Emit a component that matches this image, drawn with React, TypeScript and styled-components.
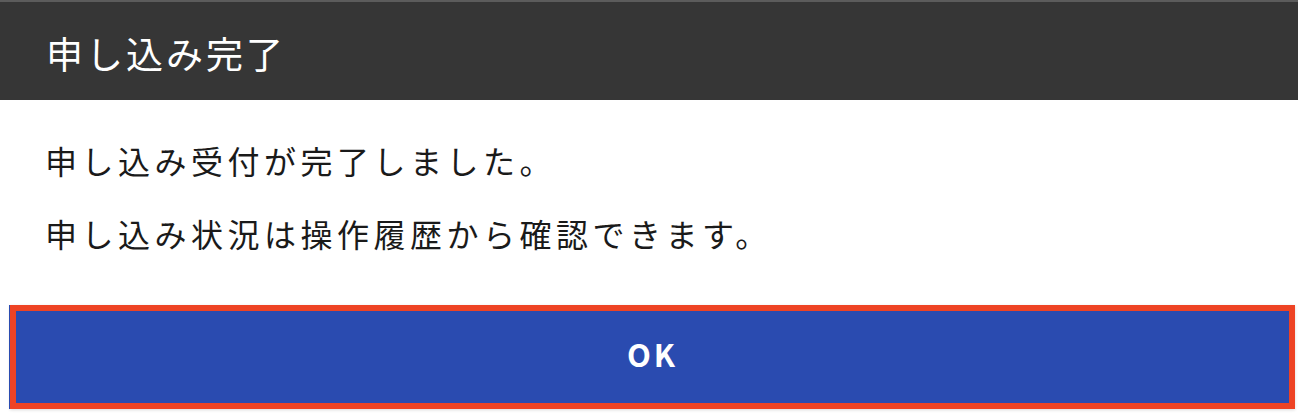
import styled, { createGlobalStyle } from "styled-components";

const GlobalStyle = createGlobalStyle`
  html, body {
    margin: 0;
    padding: 0;
    background: #fff;
  }
  body {
    font-family: "Noto Sans CJK JP", "Noto Sans", sans-serif;
  }
`;

const Dialog = styled.div`
  width: 1298px;
  height: 414px;
  display: flex;
  flex-direction: column;
  background: #fff;
  overflow: hidden;
`;

const Header = styled.div`
  height: 98px;
  border-top: 2px solid #5c5c5c;
  background: #363636;
  display: flex;
  align-items: center;
  padding: 4px 0 0 46px;
  box-sizing: border-box;
  height: 100px;
`;

const Title = styled.h1`
  margin: 0;
  color: #fff;
  font-size: 37px;
  font-weight: 400;
  letter-spacing: 3px;
`;

const Body = styled.div`
  display: flex;
  flex-direction: column;
  gap: 25px;
  padding: 36px 0 0 45px;
  height: 205px;
  box-sizing: border-box;
`;

const Message = styled.p`
  margin: 0;
  color: #1a1a1a;
  font-size: 32px;
  line-height: 48px;
  letter-spacing: 4.5px;
`;

const Footer = styled.div`
  padding: 0 3px 0 10px;
`;

const OkButton = styled.button`
  width: 100%;
  height: 104px;
  padding: 0 0 8px;
  background: #2a4bb0;
  border: 6px solid #ee4324;
  box-shadow: -1px 0 0 #2a4bb0, 0 1px 3px rgba(0, 0, 0, 0.15);
  color: #fff;
  font-family: "Noto Sans CJK JP", "Noto Sans", sans-serif;
  font-size: 31px;
  font-weight: 700;
  letter-spacing: 3px;
  cursor: pointer;
`;

const App = () => {
  return (
    <>
      <GlobalStyle />
      <Dialog>
        <Header>
          <Title>申し込み完了</Title>
        </Header>
        <Body>
          <Message>申し込み受付が完了しました。</Message>
          <Message>申し込み状況は操作履歴から確認できます。</Message>
        </Body>
        <Footer>
          <OkButton>OK</OkButton>
        </Footer>
      </Dialog>
    </>
  );
};

export default App;
